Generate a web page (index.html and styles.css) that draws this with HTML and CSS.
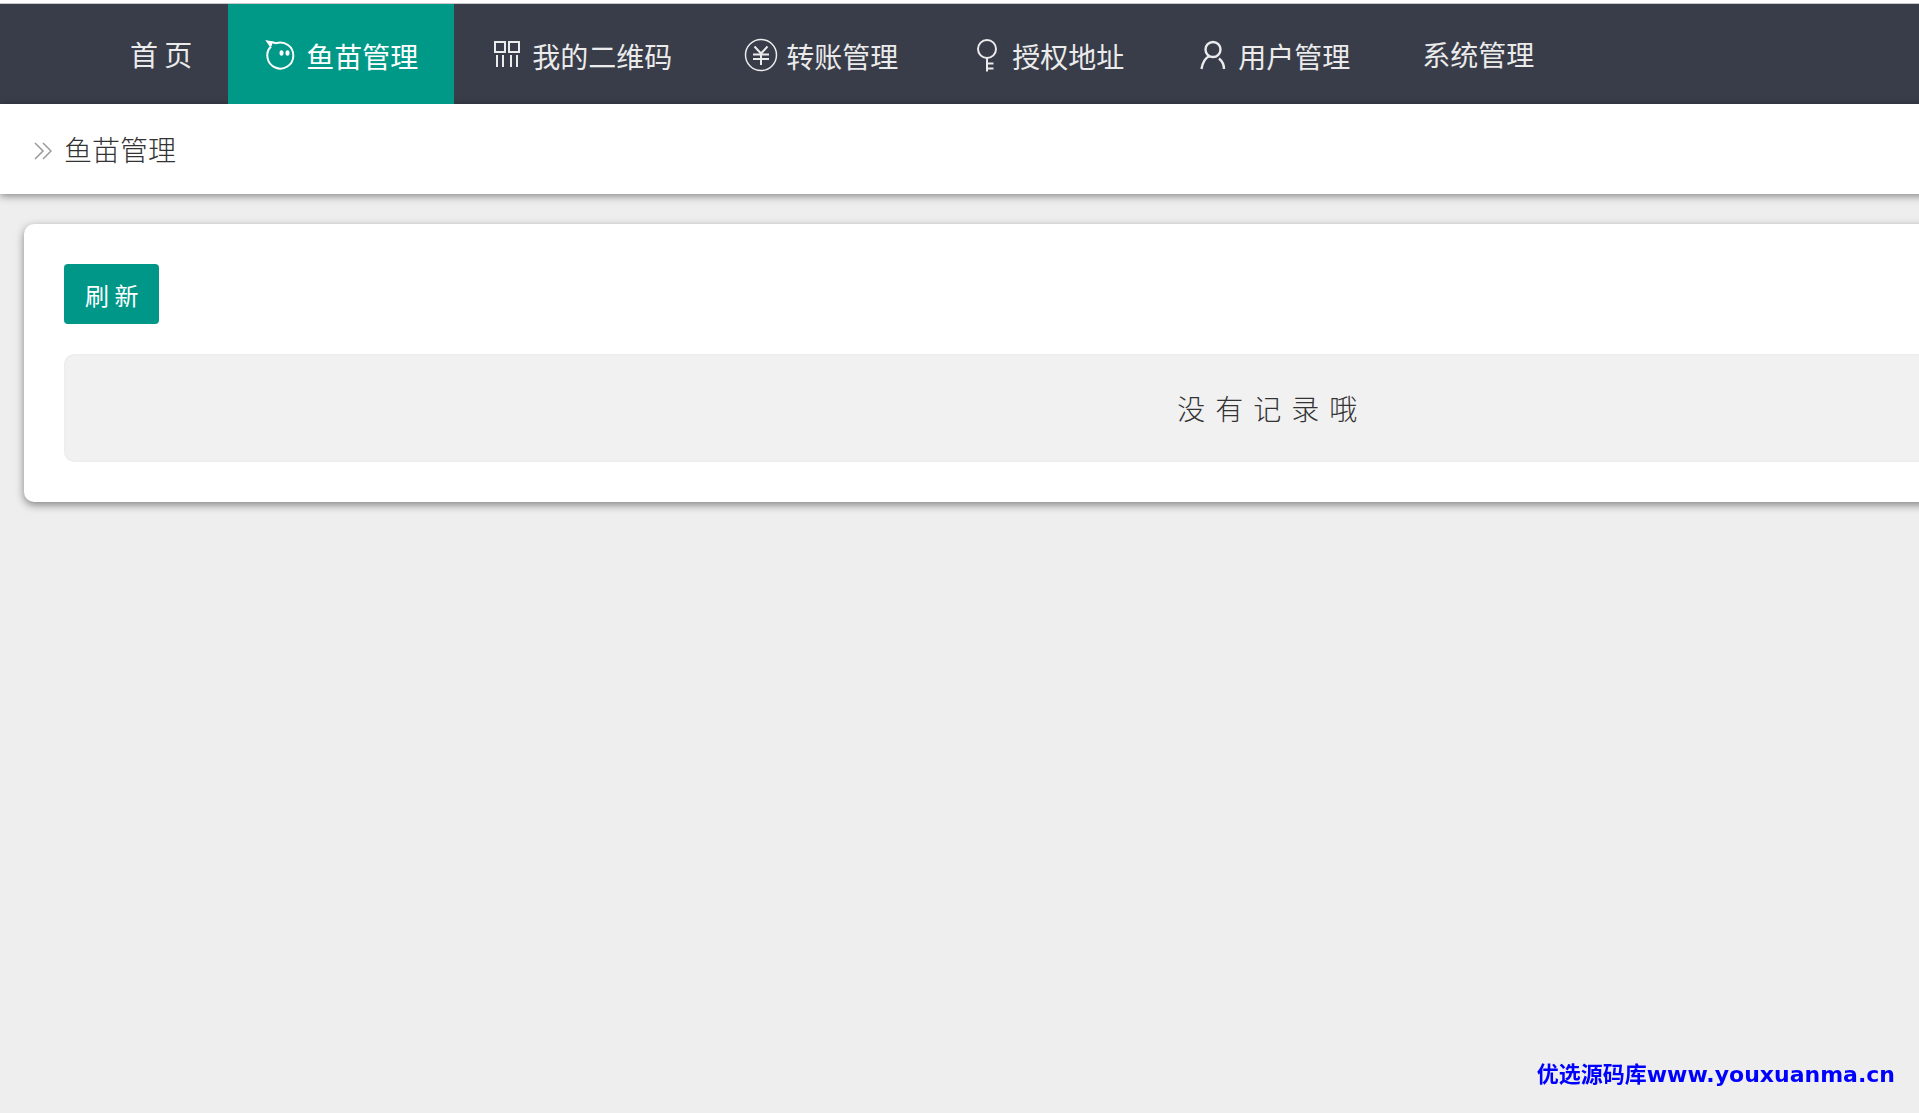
FILE: index.html
```html
<!DOCTYPE html>
<html lang="zh-CN">
<head>
<meta charset="utf-8">
<title>鱼苗管理</title>
<link rel="stylesheet" href="styles.css">
</head>
<body>
<div class="page">
  <header class="topbar">
    <nav class="nav">
      <a class="nav-item" href="#">首 页</a>
      <a class="nav-item active" href="#">
        <svg class="icon" viewBox="0 0 34 36" fill="none" stroke="currentColor" stroke-width="2">
          <path d="M7 10.500A13 13 0 1 0 12 7.300M7 10.500C5.500 9 4.500 7 3.500 5.500C5.500 6 8.500 6 9.500 6.500L12 7.300"/>
          <path d="M3 5L7.500 10L9 6Z" fill="currentColor" stroke="none"/>
          <ellipse cx="17.500" cy="17" rx="2" ry="2.800" fill="currentColor" stroke="none"/>
          <ellipse cx="23.500" cy="17" rx="2" ry="2.800" fill="currentColor" stroke="none"/>
        </svg>
        <span class="label">鱼苗管理</span>
      </a>
      <a class="nav-item" href="#">
        <svg class="icon" viewBox="0 0 34 36" fill="none" stroke="currentColor" stroke-width="2">
          <path d="M5 6h10v10H5zM19 6h10v10H19zM7 19v12M13 19v12M21 19v12M27 19v12"/>
        </svg>
        <span class="label">我的二维码</span>
      </a>
      <a class="nav-item" href="#">
        <svg class="icon" viewBox="0 0 34 36" fill="none" stroke="currentColor" stroke-width="2">
          <circle cx="17" cy="19" r="15.500" stroke-width="1.500"/>
          <path d="M10.500 10.500L17 17.500L23.500 10.500M17 17.500V29M9 18.500h16M9 23h16"/>
        </svg>
        <span class="label">转账管理</span>
      </a>
      <a class="nav-item" href="#">
        <svg class="icon" viewBox="0 0 34 36" fill="none" stroke="currentColor" stroke-width="2">
          <circle cx="17" cy="13" r="9"/>
          <path d="M17 22v13.500M17 27.500h6.500M17 32.500h6.500"/>
        </svg>
        <span class="label">授权地址</span>
      </a>
      <a class="nav-item" href="#">
        <svg class="icon" viewBox="0 0 34 36" fill="none" stroke="currentColor" stroke-width="2.400">
          <circle cx="17" cy="13.500" r="7.500"/>
          <path d="M13.500 20C9 22 6.500 27 5.500 33M23 22.500C26 25 28 29 28 33"/>
        </svg>
        <span class="label">用户管理</span>
      </a>
      <a class="nav-item" href="#">系统管理</a>
    </nav>
  </header>

  <div class="crumbs">
    <svg class="chevrons" viewBox="0 0 18 18" fill="none" stroke="currentColor" stroke-width="1.500">
      <path d="M1 1l8 8l-8 8M9 1l8 8l-8 8"/>
    </svg>
    <h1 class="title">鱼苗管理</h1>
  </div>

  <main class="card">
    <button class="refresh" type="button">刷 新</button>
    <p class="empty">没有记录哦</p>
  </main>
</div>
<p class="watermark">优选源码库www.youxuanma.cn</p>
</body>
</html>
```
FILE: styles.css
```css
* {
  box-sizing: border-box;
}

body {
  margin: 0;
  min-height: 100vh;
  overflow: hidden;
  background: #eee;
  color: #333;
  font-family: "Noto Sans CJK SC", sans-serif;
  font-size: 28px;
}

/* The work area is wider than the window and runs off to the right. */
.page {
  width: 133%;
}

.topbar {
  border-top: 3px solid #fff;
  background: #393d49;
}

.nav {
  display: flex;
  padding-left: 94px;
  border-top: 1px solid #c8c8cc;
}

.nav-item {
  display: flex;
  align-items: center;
  gap: 8px;
  height: 100px;
  padding: 0 36px;
  color: #ebebec;
  text-decoration: none;
  white-space: pre;
}

.nav-item.active {
  background: #009988;
  color: #fff;
}

.icon {
  width: 34px;
  height: 36px;
}

.label {
  padding-top: 4px;
}

.crumbs {
  display: flex;
  align-items: center;
  gap: 12px;
  height: 90px;
  padding-left: 34px;
  background: #fff;
  box-shadow: 0 2px 8px rgba(0, 0, 0, 0.45);
}

.chevrons {
  width: 18px;
  height: 18px;
  margin-top: 4px;
  color: #999;
}

.title {
  margin: 0;
  font-size: 28px;
  font-weight: 300;
}

.card {
  margin: 30px 32px 0 24px;
  padding: 40px;
  border-radius: 10px;
  background: #fff;
  box-shadow: 0 3px 8px rgba(0, 0, 0, 0.45);
}

.refresh {
  display: block;
  height: 60px;
  padding: 0 21px;
  border: 0;
  border-radius: 4px;
  background: #009688;
  color: #fff;
  font-family: inherit;
  font-size: 24px;
}

.empty {
  margin: 30px 0 0;
  padding: 32px 0;
  border: 2px solid #eee;
  border-radius: 10px;
  background: #f1f1f1;
  font-size: 28px;
  font-weight: 300;
  line-height: 40px;
  letter-spacing: 10px;
  text-align: center;
}

.watermark {
  position: fixed;
  right: 24px;
  bottom: 22px;
  margin: 0;
  color: #00f;
  font-family: "DejaVu Sans", "Noto Sans CJK SC", sans-serif;
  font-size: 22px;
  font-weight: 700;
  line-height: 32px;
}
```
